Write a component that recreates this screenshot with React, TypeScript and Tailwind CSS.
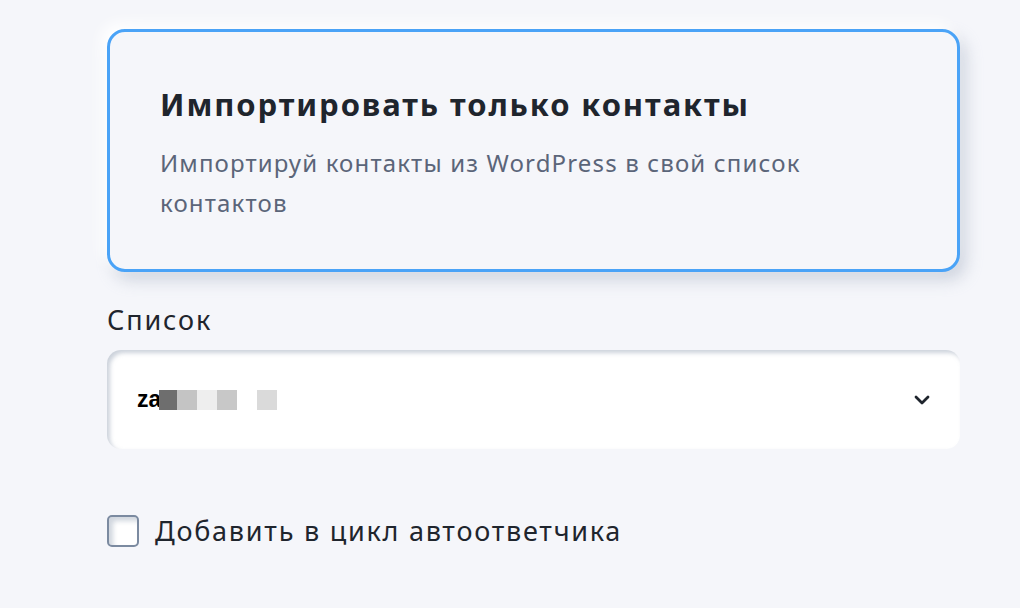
import React from "react";

export default function App() {
  return (
    <div className="min-h-[608px] w-[1020px] bg-[#f5f6fa] pl-[107px] pr-[60px] pt-[29px]" style={{ fontFamily: '"Noto Sans", "Open Sans", sans-serif' }}>
      <div className="rounded-[18px] border-[3px] border-[#4aa3f7] bg-[#f5f6fa] pl-[50px] pr-[40px] pt-[52px] pb-[46px] shadow-[-6px_-6px_14px_#ffffff,6px_8px_16px_rgba(160,170,190,0.45)]">
        <h2 className="text-[31px] font-bold leading-[40px] tracking-[1.9px] text-[#1f252d]">Импортировать только контакты</h2>
        <p className="mt-[19px] text-[24px] leading-[40px] tracking-[1.15px] text-[#5b6579]">
          Импортируй контакты из WordPress в свой список
          <br />
          контактов
        </p>
      </div>
      <div className="mt-[30px] text-[27px] leading-[36px] text-[#1f252d] tracking-[1.9px]">Список</div>
      <div className="mt-[12px] flex h-[99px] items-center justify-between rounded-[14px] bg-white pl-[30px] pr-[30px] shadow-[inset_3px_3px_4px_rgba(170,180,195,0.6)]">
        <div className="flex items-center">
          <span className="text-[23px] font-bold text-black" style={{ fontFamily: '"Liberation Sans", Arial, sans-serif' }}>za</span>
          <div className="ml-[-2px] flex">
            <div className="h-[20px] w-[18px] bg-[#6e6e6e]" />
            <div className="h-[20px] w-[20px] bg-[#c4c4c4]" />
            <div className="h-[20px] w-[20px] bg-[#eeeeee]" />
            <div className="h-[20px] w-[20px] bg-[#c8c8c8]" />
            <div className="h-[20px] w-[20px] bg-white" />
            <div className="h-[20px] w-[20px] bg-[#dadada]" />
          </div>
        </div>
        <svg width="16" height="10" viewBox="0 0 16 10" fill="none">
          <path d="M2 2 L8 8 L14 2" stroke="#1f252d" strokeWidth="2.8" strokeLinecap="round" strokeLinejoin="round" />
        </svg>
      </div>
      <label className="mt-[64px] flex h-[36px] items-center gap-[16px]">
        <span className="h-[32px] w-[32px] rounded-[5px] border-2 border-[#7b8aa0] bg-white shadow-[inset_4px_4px_5px_rgba(170,180,195,0.55)]" />
        <span className="text-[27px] leading-[36px] tracking-[1.75px] text-[#1f252d]">Добавить в цикл автоответчика</span>
      </label>
    </div>
  );
}
